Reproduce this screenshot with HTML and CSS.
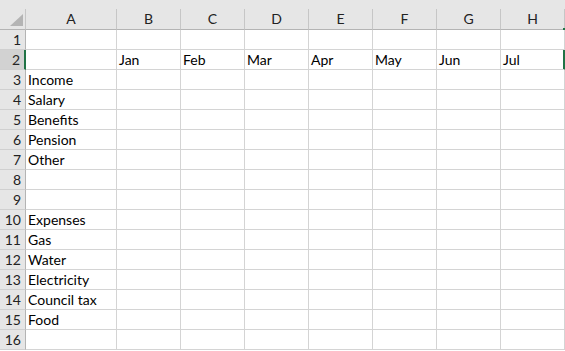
FILE: index.html
```html
<!DOCTYPE html>
<html lang="en">
<head>
    <meta charset="UTF-8">
    <title>Budget</title>
    <link rel="stylesheet" href="styles.css">
</head>
<body>
    <div class="sheet">
        <div class="top-strip"></div>
        <div class="grid">
            <!-- column headers -->
            <div class="corner"><span class="tri"></span></div>
            <div class="col-head">A</div>
            <div class="col-head">B</div>
            <div class="col-head">C</div>
            <div class="col-head">D</div>
            <div class="col-head">E</div>
            <div class="col-head">F</div>
            <div class="col-head">G</div>
            <div class="col-head last">H</div>

            <div class="row-head">1</div>
            <div class="cell"></div><div class="cell"></div><div class="cell"></div><div class="cell"></div><div class="cell"></div><div class="cell"></div><div class="cell"></div><div class="cell"></div>

            <div class="row-head selected">2</div>
            <div class="cell"></div><div class="cell">Jan</div><div class="cell">Feb</div><div class="cell">Mar</div><div class="cell">Apr</div><div class="cell">May</div><div class="cell">Jun</div><div class="cell active">Jul</div>

            <div class="row-head">3</div>
            <div class="cell">Income</div><div class="cell"></div><div class="cell"></div><div class="cell"></div><div class="cell"></div><div class="cell"></div><div class="cell"></div><div class="cell"></div>

            <div class="row-head">4</div>
            <div class="cell">Salary</div><div class="cell"></div><div class="cell"></div><div class="cell"></div><div class="cell"></div><div class="cell"></div><div class="cell"></div><div class="cell"></div>

            <div class="row-head">5</div>
            <div class="cell">Benefits</div><div class="cell"></div><div class="cell"></div><div class="cell"></div><div class="cell"></div><div class="cell"></div><div class="cell"></div><div class="cell"></div>

            <div class="row-head">6</div>
            <div class="cell">Pension</div><div class="cell"></div><div class="cell"></div><div class="cell"></div><div class="cell"></div><div class="cell"></div><div class="cell"></div><div class="cell"></div>

            <div class="row-head">7</div>
            <div class="cell">Other</div><div class="cell"></div><div class="cell"></div><div class="cell"></div><div class="cell"></div><div class="cell"></div><div class="cell"></div><div class="cell"></div>

            <div class="row-head">8</div>
            <div class="cell"></div><div class="cell"></div><div class="cell"></div><div class="cell"></div><div class="cell"></div><div class="cell"></div><div class="cell"></div><div class="cell"></div>

            <div class="row-head">9</div>
            <div class="cell"></div><div class="cell"></div><div class="cell"></div><div class="cell"></div><div class="cell"></div><div class="cell"></div><div class="cell"></div><div class="cell"></div>

            <div class="row-head">10</div>
            <div class="cell">Expenses</div><div class="cell"></div><div class="cell"></div><div class="cell"></div><div class="cell"></div><div class="cell"></div><div class="cell"></div><div class="cell"></div>

            <div class="row-head">11</div>
            <div class="cell">Gas</div><div class="cell"></div><div class="cell"></div><div class="cell"></div><div class="cell"></div><div class="cell"></div><div class="cell"></div><div class="cell"></div>

            <div class="row-head">12</div>
            <div class="cell">Water</div><div class="cell"></div><div class="cell"></div><div class="cell"></div><div class="cell"></div><div class="cell"></div><div class="cell"></div><div class="cell"></div>

            <div class="row-head">13</div>
            <div class="cell">Electricity</div><div class="cell"></div><div class="cell"></div><div class="cell"></div><div class="cell"></div><div class="cell"></div><div class="cell"></div><div class="cell"></div>

            <div class="row-head">14</div>
            <div class="cell">Council tax</div><div class="cell"></div><div class="cell"></div><div class="cell"></div><div class="cell"></div><div class="cell"></div><div class="cell"></div><div class="cell"></div>

            <div class="row-head">15</div>
            <div class="cell">Food</div><div class="cell"></div><div class="cell"></div><div class="cell"></div><div class="cell"></div><div class="cell"></div><div class="cell"></div><div class="cell"></div>

            <div class="row-head">16</div>
            <div class="cell"></div><div class="cell"></div><div class="cell"></div><div class="cell"></div><div class="cell"></div><div class="cell"></div><div class="cell"></div><div class="cell"></div>
        </div>
    </div>
</body>
</html>
```

FILE: styles.css
```css
/* Reset */
* {
    margin: 0;
    padding: 0;
    box-sizing: border-box;
}

body {
    width: 565px;
    height: 351px;
    overflow: hidden;
    background-color: #ffffff;
    font-family: Lato, "Open Sans", sans-serif;
    color: #000000;
}

.top-strip {
    height: 9px;
    background-color: #e6e6e6;
}

.grid {
    display: grid;
    grid-template-columns: 26px 91px repeat(7, 64px);
    grid-template-rows: 21px;
    grid-auto-rows: 20px;
}

.corner,
.col-head,
.row-head {
    background-color: #e6e6e6;
    border-right: 1px solid #c6c6c6;
    border-bottom: 1px solid #b4b4b4;
    color: #222222;
    font-size: 14px;
}

.corner {
    position: relative;
}

.tri {
    position: absolute;
    right: 2px;
    bottom: 3px;
    width: 0;
    height: 0;
    border-left: 13px solid transparent;
    border-bottom: 12px solid #b4b4b4;
}

.col-head {
    text-align: center;
    line-height: 20px;
}

.col-head.last {
    position: relative;
}

/* selection marker of the next column */
.col-head.last::after {
    content: "";
    position: absolute;
    right: -1px;
    bottom: -1px;
    width: 2px;
    height: 2px;
    background-color: #217346;
}

.row-head {
    text-align: right;
    padding-right: 4px;
    line-height: 19px;
    border-bottom-color: #d0d0d0;
    border-right-color: #b4b4b4;
}

.row-head.selected {
    background-color: #d2d2d2;
    color: #262626;
    border-right: 2px solid #217346;
}

.cell {
    border-right: 1px solid #d4d4d4;
    border-bottom: 1px solid #d4d4d4;
    font-size: 14px;
    line-height: 19px;
    padding-left: 2px;
    white-space: nowrap;
    overflow: hidden;
}

.cell.active {
    border-right-color: #217346;
    box-shadow: inset -1px 0 0 #217346;
}
```
